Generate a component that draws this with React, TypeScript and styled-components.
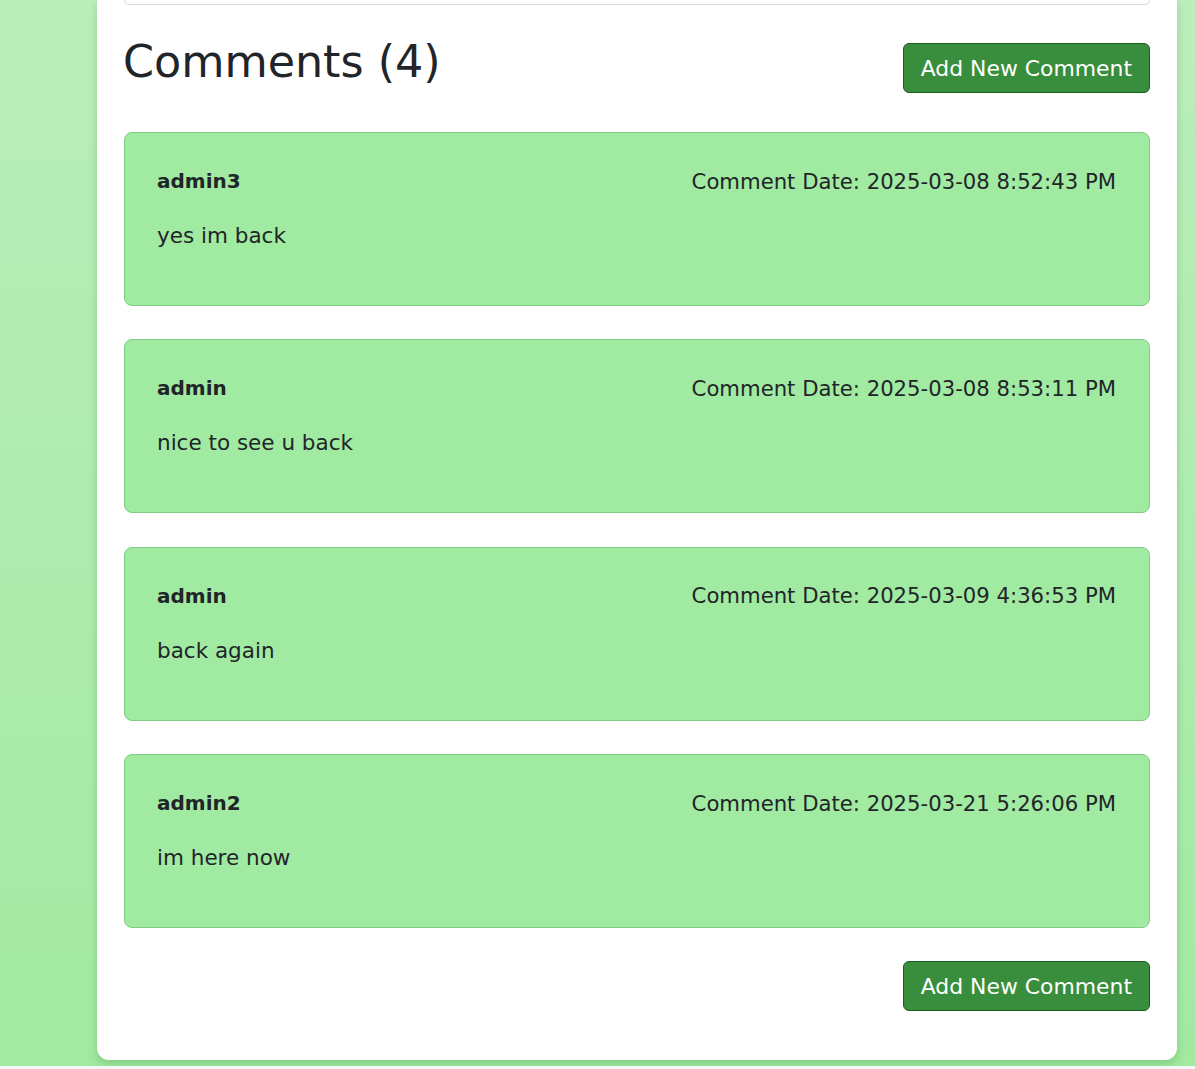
import React from "react";
import styled, { createGlobalStyle } from "styled-components";

const GlobalStyle = createGlobalStyle`
  html, body {
    margin: 0;
    padding: 0;
    background: #f6f7f6;
  }
  body {
    font-family: "DejaVu Sans", "Open Sans", sans-serif;
    color: #212529;
  }
  * { box-sizing: border-box; }
`;

const Page = styled.div`
  background: linear-gradient(180deg, #bbeebb 0%, #a2e9a2 100%);
  padding: 0 18px 6px 97px;
  height: 1066px;
  overflow: hidden;
`;

const Panel = styled.main`
  background: #ffffff;
  border-radius: 0 0 12px 12px;
  box-shadow: 0 4px 8px rgba(40, 120, 40, 0.25);
  padding: 0 27px 49px 27px;
`;

const PrevCardEdge = styled.div`
  height: 5px;
  border: 1px solid #d6d8d6;
  border-top: none;
  border-radius: 0 0 8px 8px;
`;

const HeaderRow = styled.div`
  display: flex;
  justify-content: space-between;
  align-items: center;
  height: 50px;
  margin-top: 38px;
`;

const Title = styled.h2`
  margin: 0 0 12px -1px;
  font-size: 44.4px;
  font-weight: 400;
  line-height: 1;
  color: #212529;
`;

const ActionButton = styled.button`
  font-family: inherit;
  font-size: 21.9px;
  height: 50px;
  padding: 0 17px 0 17px;
  background: #388e3c;
  color: #ffffff;
  border: 1px solid #1b5e20;
  border-radius: 6px;
  cursor: pointer;
`;

const CommentList = styled.div`
  display: flex;
  flex-direction: column;
  gap: 33.4px;
  margin-top: 39px;
`;

const Card = styled.article`
  height: 174px;
  background: #a1eaa1;
  border: 1px solid #7fcc82;
  border-radius: 8px;
  padding: 31px 33px 0 32px;
`;

const CardHead = styled.div`
  display: flex;
  justify-content: space-between;
  align-items: center;
  height: 34px;
`;

const Author = styled.span`
  font-weight: 700;
  font-size: 20px;
  color: #212529;
`;

const DateText = styled.span`
  font-size: 21.2px;
  color: #212529;
`;

const Body = styled.p`
  margin: 23px 0 0 0;
  font-size: 21.5px;
  line-height: 30px;
  color: #212529;
`;

const FooterRow = styled.div`
  display: flex;
  justify-content: flex-end;
  margin-top: 33px;
`;

const comments = [
  { author: "admin3", date: "2025-03-08 8:52:43 PM", text: "yes im back" },
  { author: "admin", date: "2025-03-08 8:53:11 PM", text: "nice to see u back" },
  { author: "admin", date: "2025-03-09 4:36:53 PM", text: "back again" },
  { author: "admin2", date: "2025-03-21 5:26:06 PM", text: "im here now" },
];

export default function App() {
  return (
    <>
      <GlobalStyle />
      <Page>
        <Panel>
          <PrevCardEdge />
          <HeaderRow>
            <Title>Comments ({comments.length})</Title>
            <ActionButton>Add New Comment</ActionButton>
          </HeaderRow>
          <CommentList>
            {comments.map((c, i) => (
              <Card key={i}>
                <CardHead>
                  <Author>{c.author}</Author>
                  <DateText>Comment Date: {c.date}</DateText>
                </CardHead>
                <Body>{c.text}</Body>
              </Card>
            ))}
          </CommentList>
          <FooterRow>
            <ActionButton>Add New Comment</ActionButton>
          </FooterRow>
        </Panel>
      </Page>
    </>
  );
}
